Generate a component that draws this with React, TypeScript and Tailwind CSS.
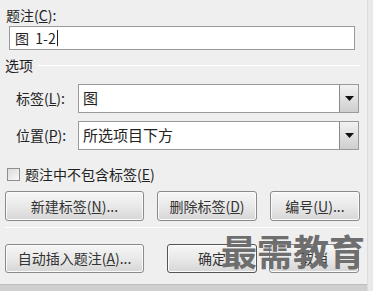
import React from "react";

const btn =
  "flex items-center justify-center rounded-[3px] border border-[#8a8a8a] bg-gradient-to-b from-[#f6f6f6] via-[#e9e9e9] to-[#d6d6d6] text-[14px] text-[#333] shadow-[inset_0_0_0_1px_#fbfbfb]";

function Combo({ value }: { value: string }) {
  return (
    <div className="flex h-[29px] w-[281px] border border-[#9a9a9a] bg-white">
      <div className="flex flex-1 items-center pl-[4px] text-[15px] text-[#222]">{value}</div>
      <div className="flex w-[19px] items-center justify-center border-l border-[#8a8a8a] bg-gradient-to-b from-[#f2f2f2] to-[#cfcfcf]">
        <svg width="9" height="5" viewBox="0 0 9 5">
          <path d="M0 0 H9 L4.5 5 Z" fill="#111" />
        </svg>
      </div>
    </div>
  );
}

export default function App() {
  return (
    <div
      className="relative flex h-[291px] w-[373px] flex-col overflow-hidden bg-[#efefef] text-[#222]"
      style={{ fontFamily: '"Noto Sans CJK SC", "Noto Sans", sans-serif' }}
    >
      <div className="absolute right-0 top-0 h-full w-[6px] border-l border-[#dcdcdc] bg-[#e9e9e9]" />

      <div className="ml-[6px] mt-[6px] h-[18px] text-[14px] leading-[18px]">
        题注(<span className="underline">C</span>):
      </div>
      <div className="ml-[9px] mt-[2px] flex h-[24px] w-[346px] items-center border border-[#9a9a9a] bg-white pl-[5px] text-[14px]">
        图&nbsp; 1-2<span className="ml-[1px] inline-block h-[16px] w-px bg-[#222]" />
      </div>

      <div className="ml-[5px] mt-[6px] flex h-[18px] items-center gap-[5px] text-[14px]">
        <span>选项</span>
        <div className="mr-[13px] h-px flex-1 border-b border-white bg-[#d6d6d6]" />
      </div>

      <div className="mt-[10px] flex items-center">
        <span className="ml-[16px] w-[62px] text-[14px]">
          标签(<span className="underline">L</span>):
        </span>
        <Combo value="图" />
      </div>
      <div className="mt-[8px] flex items-center">
        <span className="ml-[16px] w-[62px] text-[14px]">
          位置(<span className="underline">P</span>):
        </span>
        <Combo value="所选项目下方" />
      </div>

      <div className="ml-[7px] mt-[17px] flex h-[14px] items-center gap-[5px] text-[14px]">
        <div className="h-[13px] w-[13px] border border-[#8e8e8e] bg-gradient-to-br from-[#dcdcdc] to-[#f8f8f8]" />
        <span>
          题注中不包含标签(<span className="underline">E</span>)
        </span>
      </div>

      <div className="ml-[5px] mt-[10px] flex h-[30px] gap-[13px]">
        <div className={`${btn} w-[139px]`}>
          新建标签(<span className="underline">N</span>)...
        </div>
        <div className={`${btn} w-[100px]`}>
          删除标签(<span className="underline">D</span>)
        </div>
        <div className={`${btn} w-[90px]`}>
          编号(<span className="underline">U</span>)...
        </div>
      </div>

      <div className="ml-[5px] mr-[13px] mt-[6px] h-px border-b border-white bg-[#d6d6d6]" />

      <div className="ml-[5px] mt-[16px] flex h-[29px]">
        <div className={`${btn} w-[139px]`}>
          自动插入题注(<span className="underline">A</span>)...
        </div>
        <div className={`${btn} ml-[23px] w-[90px] border-[#555]`}>确定</div>
        <div className={`${btn} ml-[12px] w-[90px]`}>取消</div>
      </div>

      <div className="mt-auto h-[7px] border-t border-[#bdbdbd] bg-[#cfcfcf]" />

      <div
        className="absolute left-[221px] top-[225px] text-[36px] font-bold leading-[50px] tracking-[0px] text-[#6e6e6e]"
        style={{ fontFamily: '"Noto Sans CJK SC", sans-serif' }}
      >
        最需教育
      </div>
    </div>
  );
}
